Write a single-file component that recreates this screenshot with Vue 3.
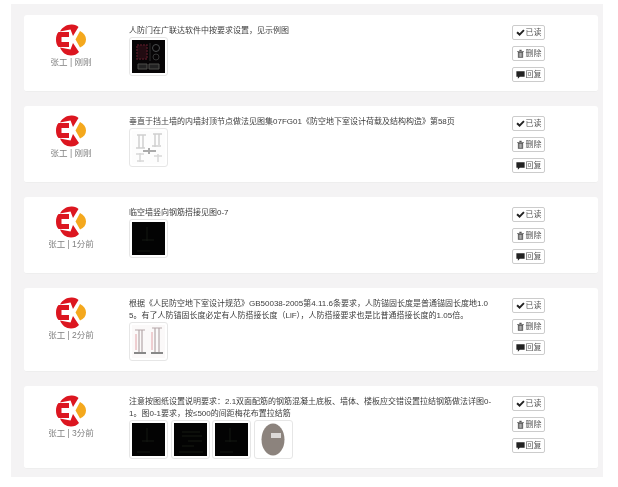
<script setup>
const items = [
  { who: '张工 | 刚刚', lines: ['人防门在广联达软件中按要求设置，见示例图'], thumbs: ['cad1'], size: 'short' },
  { who: '张工 | 刚刚', lines: ['垂直于挡土墙的内墙封顶节点做法见图集07FG01《防空地下室设计荷载及结构构造》第58页'], thumbs: ['sketch'], size: 'short' },
  { who: '张工 | 1分前', lines: ['临空墙竖向钢筋搭接见图0-7'], thumbs: ['dark'], size: 'short' },
  { who: '张工 | 2分前', lines: ['根据《人民防空地下室设计规范》GB50038-2005第4.11.6条要求，人防锚固长度是普通锚固长度地1.0', '5。有了人防锚固长度必定有人防搭接长度（LlF），人防搭接要求也是比普通搭接长度的1.05倍。'], thumbs: ['section'], size: 'tall' },
  { who: '张工 | 3分前', lines: ['注意按图纸设置说明要求：2.1双面配筋的钢筋混凝土底板、墙体、楼板应交错设置拉结钢筋做法详图0-', '1。图0-1要求，按≤500的间距梅花布置拉结筋'], thumbs: ['dark', 'dark2', 'dark', 'photo'], size: 'mid' },
]
</script>

<template>
  <div class="page">
    <div class="panel">
      <div v-for="(item, i) in items" :key="i" class="card" :class="item.size">
        <div class="author">
          <svg class="logo" viewBox="3 2 32 32">
            <path fill="#dc1620" d="M4 17.500C4 14.500 4.700 12 6.500 10H17V15H9.500V20H17V25H6.500C4.700 23 4 20.500 4 17.500Z" />
            <path fill="#dc1620" d="M8 9.500C10.500 5 15 2.200 20 2.500C23 2.800 25 3.700 26.500 5L21 14L18.500 7.500Z" />
            <path fill="#dc1620" d="M8 25.500L18.500 27.500L21 21L27 30C25 32.500 22 33.500 19 33.500C14 33.500 10 30.500 8 25.500Z" />
            <path fill="#f4a81d" d="M28 9C32 11 34 14 34 17.500C34 21 32 24 28 25.500L23.500 17.500Z" />
          </svg>
          <div class="who">{{ item.who }}</div>
        </div>
        <div class="body">
          <p v-for="(line, j) in item.lines" :key="j" class="line">{{ line }}</p>
          <div class="thumbs">
            <div v-for="(t, k) in item.thumbs" :key="k" class="thumb">
              <svg v-if="t === 'cad1'" class="art" viewBox="0 0 33 33">
                <rect width="33" height="33" fill="#070506" />
                <rect x="5" y="5" width="10" height="14" fill="#220b11" stroke="#4c1722" stroke-width="1.500" stroke-dasharray="2 1" />
                <circle cx="24" cy="8" r="3.500" fill="none" stroke="#4a4c4d" />
                <circle cx="24" cy="17" r="3" fill="none" stroke="#363636" />
                <path d="M18 3V21" stroke="#2e2e2e" />
                <path d="M6 24h9v5H6zM17 24h10v5H17z" fill="#222" stroke="#4e4e4a" />
              </svg>
              <svg v-else-if="t === 'sketch'" class="art" viewBox="0 0 33 33">
                <rect width="33" height="33" fill="#fdfdfd" />
                <path d="M5 4h9M7 4v13M11 4v13M4 17h9M21 3h9M23 3v13M27 3v11M20 15h9" stroke="#d0d0d0" stroke-width="1.500" fill="none" />
                <path d="M11 20h13M17 17v6" stroke="#ababab" stroke-width="2" />
                <path d="M4 23h8M8 22v9M22 25h8M26 23v8M5 30h7" stroke="#d8d8d8" stroke-width="1.500" fill="none" />
              </svg>
              <svg v-else-if="t === 'section'" class="art" viewBox="0 0 33 33">
                <rect width="33" height="33" fill="#fbf9f9" />
                <path d="M3 5h10M7 5v22M10 5v22M20 3h10M23 3v24M27 3v24" stroke="#b5a7a9" stroke-width="1.200" fill="none" />
                <path d="M4 9v16M20 7v18" stroke="#e2a3a8" stroke-width="1" />
                <path d="M2 28h12M19 28h12" stroke="#888" stroke-width="2" />
              </svg>
              <svg v-else-if="t === 'dark'" class="art" viewBox="0 0 33 33">
                <rect width="33" height="33" fill="#030303" />
                <path d="M15 5v14M10 18h12M5 29h13" stroke="#141812" stroke-width="1" />
              </svg>
              <svg v-else-if="t === 'dark2'" class="art" viewBox="0 0 33 33">
                <rect width="33" height="33" fill="#030303" />
                <path d="M8 9h18M8 13h20M14 18h14M8 23h12M5 29h24" stroke="#171b13" stroke-width="1" />
              </svg>
              <svg v-else class="art" viewBox="0 0 33 33">
                <rect width="33" height="33" fill="#fff" />
                <ellipse cx="16" cy="16.500" rx="11.500" ry="16" fill="#8c837d" />
                <rect x="14" y="10" width="10" height="5" fill="#dcd9d7" />
              </svg>
            </div>
          </div>
        </div>
        <div class="actions">
          <button class="btn">
            <svg class="ic" viewBox="0 0 12 12"><path d="M.5 6.500 2.300 4.700 4.800 7.100 9.700 2 11.500 3.800 4.800 10.500Z" fill="#222" /></svg>已读
          </button>
          <button class="btn">
            <svg class="ic" viewBox="0 0 12 12"><path d="M1.500 2.500h9v1h-9zM4.500 1h3v1.500h-3zM2.500 4h7v7.500h-7z" fill="#555" /><path d="M4.300 5v5.500M6 5v5.500M7.700 5v5.500" stroke="#fff" stroke-width=".7" /></svg>删除
          </button>
          <button class="btn">
            <svg class="ic" viewBox="0 0 12 12"><path d="M.5 1.500h11v7.500H5L2.500 11.500V9H.5Z" fill="#222" /></svg>回复
          </button>
        </div>
      </div>
    </div>
  </div>
</template>

<style scoped>
.page {
  width: 618px;
  height: 487px;
  box-sizing: border-box;
  padding: 4px 15px 0 11px;
  overflow: hidden;
  font-family: "Liberation Sans", "Noto Sans CJK SC", sans-serif;
  filter: blur(0.45px);
}
.panel {
  height: 473px;
  box-sizing: border-box;
  padding: 11px 5px 0 13px;
  background: #f4f3f4;
  display: flex;
  flex-direction: column;
  gap: 14px;
}
.card {
  display: flex;
  box-sizing: border-box;
  background: #fff;
  border-bottom: 1px solid #eeeeee;
  border-radius: 3px;
}
.short { height: 77px; }
.tall { height: 84px; }
.mid { height: 83px; }
.author {
  width: 94px;
  flex: none;
  padding-top: 9px;
  display: flex;
  flex-direction: column;
  align-items: center;
}
.logo { width: 32px; height: 32px; flex: none; }
.who {
  font-size: 8.5px;
  line-height: 12px;
  color: #808080;
  white-space: nowrap;
}
.body {
  flex: 1;
  margin-left: 11px;
  padding-top: 10px;
}
.line {
  margin: 0;
  font-size: 8px;
  line-height: 12px;
  color: #3c3c3c;
  white-space: nowrap;
}
.thumbs {
  display: flex;
  gap: 2.5px;
}
.thumb {
  width: 39px;
  height: 39px;
  box-sizing: border-box;
  padding: 2px;
  border: 1px solid #e6e6e6;
  border-radius: 3px;
  background: #fff;
}
.art { display: block; width: 100%; height: 100%; }
.actions {
  flex: none;
  width: 33px;
  margin-right: 53px;
  padding-top: 10px;
  display: flex;
  flex-direction: column;
  gap: 6px;
}
.btn {
  width: 33px;
  height: 15px;
  padding: 0;
  display: flex;
  align-items: center;
  justify-content: center;
  gap: 1px;
  background: #fff;
  border: 1px solid #ccc;
  border-radius: 2px;
  font: 8px/1 "Liberation Sans", "Noto Sans CJK SC", sans-serif;
  color: #555;
}
.ic { width: 9px; height: 9px; flex: none; }
</style>
